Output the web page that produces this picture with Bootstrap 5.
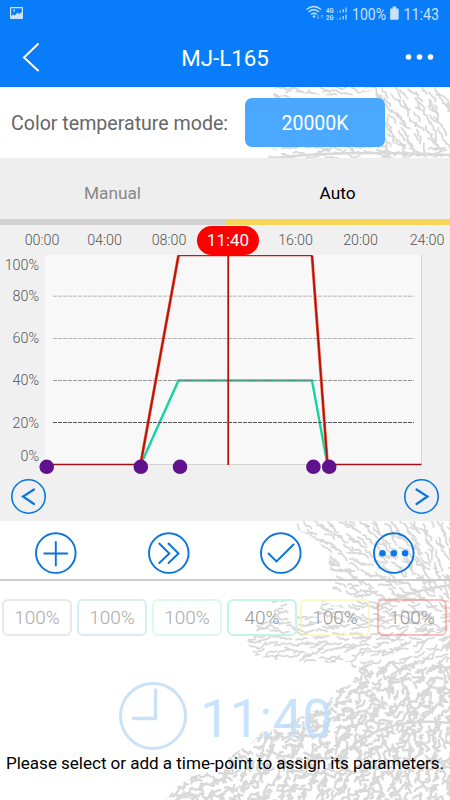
<!DOCTYPE html>
<html lang="en">
<head>
<meta charset="utf-8">
<meta name="viewport" content="width=device-width, initial-scale=1">
<title>MJ-L165</title>
<link href="https://cdn.jsdelivr.net/npm/bootstrap@5.3.0/dist/css/bootstrap.min.css" rel="stylesheet">
<style>
body{font-family:Roboto,"Liberation Sans",sans-serif;width:450px;height:800px;overflow:hidden;background:#fff;line-height:1}
svg{display:block;flex:none}
svg text{font-family:Roboto,"Liberation Sans",sans-serif}
.screen{width:450px;height:800px;isolation:isolate}
.coral{left:0;top:0;z-index:-1}
.topbar{height:87px;background:#087cf9}
.statusline{height:29px}
.titleline{height:58px;font-size:22.3px}
.mode-row{height:71px;padding-left:11px}
.mode-label{width:234px;font-size:19.6px;color:#666;padding-top:3px}
.mode-btn,.mode-btn:hover{width:140px;height:49px;background:#4aa8ff;color:#fff;border:0;border-radius:7px;font-size:19.5px;line-height:1;margin-top:-1px}
.mode-btn span{display:block;padding-top:4px}
.tabs-row{height:67px;background:#eee}
.tab-item{font-size:17.3px;color:#888;border-bottom:6px solid #d3d3d3;padding-top:10px}
.tab-item.on{color:#000;border-color:#f8d75a}
.panel{height:296px;background:#f0f0f0}
.hours{height:30px;padding-left:31px;font-size:14.3px;color:#555;font-weight:300}
.hours>div{display:flex;justify-content:center;align-items:center;white-space:nowrap;flex:none}
.now-pill{width:62px;height:29px;border-radius:15px;background:#f00;color:#fff;font-size:17px;font-weight:400;display:flex;align-items:center;justify-content:center}
.w1{width:22px}.w2{width:103px}.w3{width:26px}.w4{width:92px}.w5{width:43px}.w6{width:87px}.w7{width:46px}
.plot-row{height:224px}
.scale-col{width:39px;font-size:14.3px;color:#555;font-weight:300;text-align:right;padding-top:3px}
.scale-col div{height:42.2px;line-height:14px}
.scale-col div:first-child{height:31px}
.scale-col div:nth-child(5){height:33px}
.scale-col div:last-child{height:14px}
.nav-row{height:42px;padding:0 10px}
.actions{height:60px;border-bottom:2px solid #ccc;padding-top:11px}
.chips{height:75px;padding:18px 2px 0;gap:5px}
.chip{width:70px;height:37px;border:2px solid;border-radius:6px;font-size:19px;font-weight:300;color:#aaa;display:flex;align-items:center;justify-content:center;flex:none}
.c1{border-color:#e9e7e9}.c2{border-color:#d8ecf5}.c3{border-color:#dcfaeb}.c4{border-color:#c2f5e6;color:#999}.c5{border-color:rgba(248,244,170,.65);color:#999;margin-left:-2px;margin-right:2px}.c6{border-color:rgba(245,130,130,.5);color:#999}
.clock{padding:24px 0 0 118px;height:99px}
.hint{font-size:17.1px;letter-spacing:-.05px;color:#000;white-space:nowrap;padding-left:6px}
</style>
<script src="https://cdn.jsdelivr.net/npm/bootstrap@5.3.0/dist/js/bootstrap.bundle.min.js"></script>
</head>
<body>
<main class="screen position-relative d-flex flex-column">
  <svg class="coral position-absolute" width="450" height="800" aria-hidden="true">
    <defs><clipPath id="fan">
      <path d="M268 87H450V158H267L276 150L268 147L280 143L320 130L380 112L374 90L345 97L300 93L278 102Z"/>
      <path d="M296 521H450V800H165L178 786L192 776L225 768L228 757L250 744L262 732L280 728L300 717L325 706L336 690L352 684L356 674L350 662L300 664L255 656L247 642L250 630L275 610L271 600L285 600L292 614L318 617L322 600L335 606L362 600L332 589L336 576L328 567L330 555L314 538L298 530Z"/>
    </clipPath></defs>
    <g id="twigs" clip-path="url(#fan)" fill="none" stroke="#d9d9d9" stroke-linecap="round" stroke-linejoin="round"></g>
  </svg>

  <header class="topbar text-white">
    <div class="statusline">
      <svg width="450" height="29">
        <g fill="#c7e1ff">
          <path fill-rule="evenodd" d="M10.700 7h11.600q.7 0 .7.700v10.600q0 .7-.7.700h-11.600q-.7 0-.7-.7v-10.600q0-.7.7-.7zM11.200 8.200v7.800l2-1.500 1.500 1 3-3 1.200 1.500 2.900-2v-3.800zM13.500 9.500h1.500v2h-1.500z"/>
          <circle cx="314" cy="16.500" r="1.200"/>
          <path d="M390.800 8.500h1.800v-2h3.600v2h1.800q.7 0 .7.700v9.600q0 1-1 1h-6.600q-1 0-1-1v-9.600q0-.7.700-.7z"/>
          <path d="M337 12.500v-1h1v1zM339.500 12.500v-2h1.500v2zM342.500 12.500v-3.500h1.500v3.500zM345.300 12.500v-5h1.500v5zM337 19.500v-1h1v1zM339.500 19.500v-2h1.500v2zM342.500 19.500v-3.500h1.500v3.500zM345.300 19.500v-5h1.500v5z" opacity=".8"/>
          <text x="326" y="12.500" font-size="7" font-weight="700" textLength="7.500" lengthAdjust="spacingAndGlyphs">4G</text>
          <text x="326" y="19.500" font-size="7" font-weight="700" textLength="7.500" lengthAdjust="spacingAndGlyphs">2G</text>
          <text x="352" y="19.500" font-size="16" textLength="34" lengthAdjust="spacingAndGlyphs">100%</text>
          <text x="403.500" y="19.500" font-size="16" textLength="35.500" lengthAdjust="spacingAndGlyphs">11:43</text>
        </g>
        <path d="M306.500 9.500q7.500-6 14.500 0M308.700 12q5-4.500 10.200 0M311 14.500q3-2.500 5.800 0" fill="none" stroke="#c7e1ff" stroke-width="1.300"/>
        <path d="M318 15v3.500m-1.200-1.200 1.200 1.200 1.200-1.200M322 18.500v-3.500m-1.200 1.200 1.200-1.200 1.200 1.200" fill="none" stroke="#8cc1ff" stroke-width=".8"/>
      </svg>
    </div>
    <div class="titleline d-flex align-items-center justify-content-between">
      <svg width="60" height="58"><path d="M38 15 24 28.500 38 41.500" fill="none" stroke="#fff" stroke-width="2" stroke-linecap="round"/></svg>
      <span>MJ-L165</span>
      <svg width="60" height="58" fill="#fff"><circle cx="18.500" cy="28" r="2.800"/><circle cx="29.500" cy="28" r="2.800"/><circle cx="40.500" cy="28" r="2.800"/></svg>
    </div>
  </header>

  <section class="mode-row d-flex align-items-center">
    <div class="mode-label">Color temperature mode:</div>
    <button class="btn mode-btn p-0"><span>20000K</span></button>
  </section>

  <nav class="tabs-row d-flex">
    <div class="tab-item w-50 d-flex align-items-center justify-content-center">Manual</div>
    <div class="tab-item on w-50 d-flex align-items-center justify-content-center">Auto</div>
  </nav>

  <section class="panel">
    <div class="hours d-flex align-items-center">
      <div class="w1">00:00</div><div class="w2">04:00</div><div class="w3">08:00</div>
      <div class="w4"><span class="now-pill">11:40</span></div>
      <div class="w5">16:00</div><div class="w6">20:00</div><div class="w7">24:00</div>
    </div>
    <div class="plot-row d-flex">
      <div class="scale-col"><div>100%</div><div>80%</div><div>60%</div><div>40%</div><div>20%</div><div>0%</div></div>
      <svg width="411" height="224" viewBox="39 255 411 224">
        <path d="M45 255H421.500V464.500H45Z" fill="#f8f8f8"/>
        <path d="M45 464.500H421.500V255" fill="none" stroke="#d4d4d4"/>
        <path d="M140.500 465 178.500 380.500H312L327.500 465" fill="none" stroke="#12d5a0" stroke-width="2.400"/>
        <g stroke-dasharray="4 1" stroke-width="1"><path d="M53 296.200H414M53 338.500H414" stroke="#b5b5b5"/><path d="M53 380.500H414" stroke="#777" stroke-opacity=".75"/><path d="M53 422.500H414" stroke="#555"/></g>
        <path d="M140.500 464.500 178.500 255.500M312 255.500 327.500 464.500" fill="none" stroke="#ee6048" stroke-width="3"/>
        <path d="M140.500 464.500 178.500 255.500M312 255.500 327.500 464.500" fill="none" stroke="#b01208" stroke-width="1.700"/>
        <path d="M178 255.600H312" stroke="#cc160b" stroke-width="1.300"/>
        <path d="M46 464.400H140M328 464.400H421.500" stroke="#9b1018" stroke-width="1.500"/>
        <path d="M228.200 253V465" stroke="#bd1010" stroke-width="1.800"/>
        <g fill="#5f128b"><circle cx="46.700" cy="466.800" r="7.300"/><circle cx="140.800" cy="466.800" r="7.300"/><circle cx="180" cy="466.800" r="7.300"/><circle cx="313.400" cy="466.800" r="7.300"/><circle cx="329.200" cy="466.800" r="7.300"/></g>
      </svg>
    </div>
    <div class="nav-row d-flex justify-content-between">
      <svg width="37" height="37" fill="none" stroke="#0878de"><circle cx="18.500" cy="17.500" r="16.700" stroke-width="1.600"/><path d="M24 10.500 13 17.500 24 25" stroke-width="2.200" stroke-linecap="round"/></svg>
      <svg width="37" height="37" fill="none" stroke="#0878de"><circle cx="18.500" cy="17.500" r="16.700" stroke-width="1.600"/><path d="M13.500 10.500 24.500 17.500 13.500 25" stroke-width="2.200" stroke-linecap="round"/></svg>
    </div>
  </section>

  <section class="actions d-flex justify-content-around">
    <svg width="44" height="44" fill="none" stroke="#0873dc" stroke-width="1.900" stroke-linecap="round"><circle cx="21.800" cy="21.100" r="19.800"/><path d="M10.300 21.500h23M21.800 10v23.500"/></svg>
    <svg width="44" height="44" fill="none" stroke="#0873dc" stroke-width="1.900" stroke-linecap="round"><circle cx="21.800" cy="21.100" r="19.800"/><path d="M12.300 11.500 22.300 21.500 12.300 31M21.500 11.500 31.500 21.500 21.500 31"/></svg>
    <svg width="44" height="44" fill="none" stroke="#0873dc" stroke-width="1.900" stroke-linecap="round"><circle cx="21.800" cy="21.100" r="19.800"/><path d="M9.500 21.500 17.500 29.500 34.500 12.500"/></svg>
    <svg width="44" height="44" fill="none" stroke="#0873dc" stroke-width="1.900"><circle cx="21.800" cy="21.100" r="19.800"/><g fill="#0878ea" stroke="none"><circle cx="10.500" cy="21.200" r="3.300"/><circle cx="21.800" cy="21.200" r="3.300"/><circle cx="33.100" cy="21.200" r="3.300"/></g></svg>
  </section>

  <section class="chips d-flex">
    <div class="chip c1">100%</div><div class="chip c2">100%</div><div class="chip c3">100%</div><div class="chip c4">40%</div><div class="chip c5">100%</div><div class="chip c6">100%</div>
  </section>

  <section class="clock">
    <svg width="230" height="72">
      <g fill="none" stroke="#cbe1f8"><circle cx="35" cy="36" r="32.500" stroke-width="3"/><path d="M15.500 38.500H37.500V10" stroke-width="3.500" stroke-linecap="round" stroke-linejoin="round"/></g>
      <text x="82" y="56.500" font-size="53" fill="#bbdcfb" fill-opacity=".8" textLength="132" lengthAdjust="spacingAndGlyphs">11:40</text>
    </svg>
  </section>
  <div class="hint">Please select or add a time-point to assign its parameters.</div>
</main>
<script>
// Sea-fan backdrop: short crooked twigs that fan out from a root on the right.
let seed = 77;
const rnd = () => (seed = (seed * 16807) % 2147483647) / 2147483647;
const root = [475, 625];
let thin = '', thick = '';
for (let y = 85; y < 806; y += 5) {
  if (y > 162 && y < 515) continue;
  for (let x = 160; x < 460; x += y > 660 ? 10 : 13) {
    let px = x + rnd() * 11, py = y + rnd() * 5;
    const low = y > 660;
    let a = Math.atan2(root[1] - py, root[0] - px);
    if (y < 165) a = px > 375 && py < 148 ? 0.95 : 0.15;
    let d = 'M' + px.toFixed(1) + ' ' + py.toFixed(1);
    for (let i = 0; i < 4; i++) {
      const t = a + (rnd() - .5) * (low ? 3 : 1.5);
      px += Math.cos(t) * 3; py += Math.sin(t) * 3;
      d += 'L' + px.toFixed(1) + ' ' + py.toFixed(1);
    }
    if (low) thick += d; else thin += d;
  }
}
document.getElementById('twigs').innerHTML =
  '<path stroke-width="1.8" d="' + thin + '"/><path stroke-width="2.4" d="' + thick + '"/>' +
  '<path stroke-width="2.5" d="M275 158Q340 150 450 155M450 585Q410 590 375 608M450 723Q400 718 370 735T330 765"/>';
</script>
</body>
</html>
